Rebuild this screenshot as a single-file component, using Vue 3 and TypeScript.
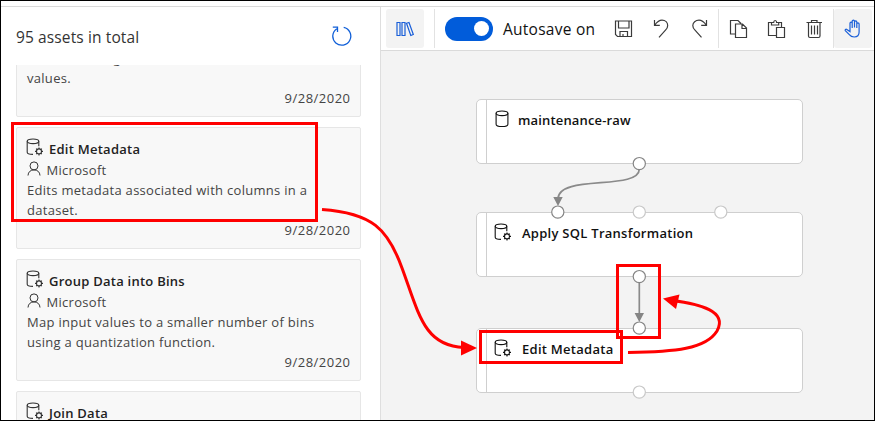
<script setup lang="ts">
interface Asset {
  id: number
  title?: string
  lines: string[]
  date?: string
}
interface Port {
  x: number
  edge: 'top' | 'bottom'
  linked: boolean
}
interface FlowNode {
  title: string
  y: number
  h: number
  gear: boolean
  ports: Port[]
}

const assets: Asset[] = [
  { id: 1, lines: ['Cleans missing', 'values.'], date: '9/28/2020' },
  { id: 2, title: 'Edit Metadata', lines: ['Edits metadata associated with columns in a', 'dataset.'], date: '9/28/2020' },
  { id: 3, title: 'Group Data into Bins', lines: ['Map input values to a smaller number of bins', 'using a quantization function.'], date: '9/28/2020' },
  { id: 4, title: 'Join Data', lines: [] },
]

const nodes: FlowNode[] = [
  { title: 'maintenance-raw', y: 48, h: 65, gear: false, ports: [{ x: 163, edge: 'bottom', linked: true }] },
  {
    title: 'Apply SQL Transformation', y: 161, h: 65, gear: true,
    ports: [
      { x: 81.5, edge: 'top', linked: true },
      { x: 163, edge: 'top', linked: false },
      { x: 244.5, edge: 'top', linked: false },
      { x: 163, edge: 'bottom', linked: true },
    ],
  },
  {
    title: 'Edit Metadata', y: 277, h: 64.5, gear: true,
    ports: [
      { x: 163, edge: 'top', linked: true },
      { x: 163, edge: 'bottom', linked: false },
    ],
  },
]
const teeth = [0, 45, 90, 135, 180, 225, 270, 315]
</script>

<template>
  <div class="frame">
    <svg class="defs" width="0" height="0">
      <symbol id="i-cyl" viewBox="0 0 18 18">
        <ellipse cx="8" cy="3.3" rx="5.9" ry="2.3" />
        <path d="M2.1 3.3V14.2C2.1 15.5 4.700 16.500 8 16.500S13.900 15.500 13.900 14.200V3.300" />
      </symbol>
      <symbol id="i-cylgear" viewBox="0 0 18 18">
        <ellipse cx="7" cy="3.300" rx="5.800" ry="2.300" />
        <path d="M1.200 3.300V14.200C1.200 15.500 3.400 16.300 7 16.400M12.800 3.300V8.200" />
        <circle cx="13" cy="13.400" r="2.500" />
        <path v-for="a in teeth" :key="a" d="M13 10.900V9.400" :transform="`rotate(${a} 13 13.400)`" />
      </symbol>
      <symbol id="i-person" viewBox="0 0 14 15">
        <circle cx="7" cy="4.900" r="4" />
        <path d="M1 14.500C1.200 11 3.500 8.900 7 8.900S12.800 11 13 14.500" />
      </symbol>
    </svg>

    <div class="strip"></div>
    <div class="workspace">
      <aside class="sidebar">
        <header class="side-head">
          <span class="total">95 assets in total</span>
          <svg class="refresh" width="22" height="22" viewBox="0 0 22 22">
            <path d="M13.700 2.400A9 9 0 1 1 6.800 3.700M2.800 2.200H7.500V6.900" />
          </svg>
        </header>
        <div class="list">
          <article v-for="a in assets" :key="a.id" class="card" :class="{ clipped: !a.title }">
            <template v-if="a.title">
              <h3><svg class="ico" width="18" height="18"><use href="#i-cylgear" /></svg><span>{{ a.title }}</span></h3>
              <p v-if="a.date" class="author"><svg class="ico" width="14" height="15"><use href="#i-person" /></svg><span>Microsoft</span></p>
            </template>
            <p v-for="l in a.lines" :key="l" class="desc">{{ l }}</p>
            <time v-if="a.date">{{ a.date }}</time>
          </article>
        </div>
      </aside>

      <main class="main">
        <nav class="toolbar">
          <button class="tool tinted blue library">
            <svg width="20" height="18" viewBox="0 0 20 18">
              <path d="M2 2.500h3v13H2zM7 2.500h3v13H7zM11.500 3.300l2.500-.8 4.300 12-2.500 1z" />
            </svg>
          </button>
          <i class="rule first"></i>
          <span class="toggle"><b></b></span>
          <span class="autosave">Autosave on</span>
          <button class="tool save">
            <svg width="20" height="20" viewBox="0 0 20 20">
              <path d="M2.500 2h16v15.500h-14L2.500 15.500zM5.500 2v7h10.500V2M7 17.500v-5h7.500v5M10 17.500v-2.500" />
            </svg>
          </button>
          <button class="tool">
            <svg width="20" height="20" viewBox="0 0 20 20">
              <path d="M3.500 1v5.300h5.300M3.700 6.100C6 3 8 1.200 11 1.200c3.400 0 5.700 2.300 5.700 5.300 0 2-.8 3.200-2 4.400L8 18.300" />
            </svg>
          </button>
          <button class="tool">
            <svg width="20" height="20" viewBox="0 0 20 20">
              <path d="M17.500 1v5.300h-5.300M17.300 6.100C15 3 13 1.200 10 1.200 6.600 1.200 3.800 3.500 3.800 6.500c0 2 .8 3.200 2 4.400l6.700 7.400" />
            </svg>
          </button>
          <i class="rule"></i>
          <button class="tool">
            <svg width="20" height="20" viewBox="0 0 20 20">
              <path d="M7.500 15H2.500V1.500H10L13 4.500M7.500 5h7l4 4v9.500h-11zM14 5v4.500h4.500" />
            </svg>
          </button>
          <button class="tool">
            <svg width="20" height="20" viewBox="0 0 20 20">
              <path d="M10.500 16.500h-8v-13h3M12.500 3.500h3v5M5.500 6V3.500h2.200C7.700.8 10.600.8 10.600 3.500h2.100V6zM10.500 8.500h8v10h-8z" />
            </svg>
          </button>
          <button class="tool">
            <svg width="20" height="20" viewBox="0 0 20 20">
              <path d="M2.500 3.500h15.500M7.500 3.300V1.500h5.500v1.800M4.500 3.500v13.500c0 1 .5 1.500 1.500 1.500h8.500c1 0 1.500-.5 1.500-1.500V3.500M7.500 6.500v9M10.500 6.500v9M13.500 6.500v9" />
            </svg>
          </button>
          <i class="rule last"></i>
          <button class="tool tinted blue hand">
            <svg width="20" height="20" viewBox="0 0 20 20">
              <path d="M7 11V4.200c0-1.400 2.200-1.400 2.200 0V9M9.200 8.500V2.200c0-1.400 2.300-1.400 2.300 0v6.300M11.500 8.500V2.900c0-1.400 2.300-1.400 2.300 0V9M13.800 9V4.900c0-1.400 2.300-1.400 2.300 0v8.100c0 3-2 5-4.900 5-2.300 0-3.700-.8-4.900-2.300L2.300 11.700c-.6-.9.500-1.900 1.500-1.300L7 12.600V10" />
            </svg>
          </button>
        </nav>

        <section class="canvas">
          <div
            v-for="n in nodes"
            :key="n.title"
            class="node"
            :class="{ wide: n.gear }"
            :style="{ top: n.y + 'px', height: n.h + 'px' }"
          >
            <div class="label">
              <svg class="ico" width="18" height="18"><use :href="n.gear ? '#i-cylgear' : '#i-cyl'" /></svg>
              <span>{{ n.title }}</span>
            </div>
          </div>
          <svg class="links" width="493" height="369" viewBox="381 51 493 369">
            <path class="wire" d="M639.300 169C639.300 191 558 174 558 199" />
            <path class="wire" d="M639.300 281V315" />
            <path class="tip" d="M553.300 197h9.400l-4.700 9zM634.600 313h9.400l-4.700 9z" />
            <g v-for="n in nodes" :key="n.title">
              <circle
                v-for="(p, i) in n.ports"
                :key="i"
                :class="{ linked: p.linked }"
                :cx="476.300 + p.x"
                :cy="50.600 + n.y + (p.edge === 'top' ? 0.500 : n.h)"
                r="6.100"
              />
            </g>
          </svg>
        </section>
      </main>
    </div>

    <svg class="callouts" width="875" height="421" viewBox="0 0 875 421">
      <rect x="12.500" y="123.500" width="304" height="97" />
      <rect x="480.500" y="331.500" width="141" height="31" />
      <rect x="617.500" y="265.500" width="42" height="72" />
      <path class="stroke" d="M322 209.500C372 213 388 229 402 268C419 314 424 346 464 347.500" />
      <path class="fill" d="M461 340.500L477 348L461 355.500z" />
      <path class="stroke" d="M628 352.500C675 352 706 349 717 331C728 311 700 304 672 300.500" />
      <path class="fill" d="M663 298.500L679.500 294.500L676 309z" />
    </svg>
  </div>
</template>

<style>
body {
  margin: 0;
}
</style>

<style scoped>
.frame {
  position: relative;
  box-sizing: border-box;
  width: 875px;
  height: 421px;
  border: 1px solid #000;
  background: #fff;
  overflow: hidden;
  display: flex;
  flex-direction: column;
  font-family: "Open Sans", "Noto Sans", sans-serif;
  color: #333;
}
.defs {
  position: absolute;
}
.strip {
  height: 5px;
  flex: none;
  border-bottom: 1px solid #dadada;
}
.workspace {
  flex: 1;
  display: flex;
  min-height: 0;
}
svg {
  fill: none;
  flex: none;
}
.ico {
  stroke: #333;
  stroke-width: 1.1;
}
.sidebar {
  width: 379px;
  flex: none;
  display: flex;
  flex-direction: column;
  border-right: 1px solid #dedede;
}
.side-head {
  height: 58px;
  flex: none;
  display: flex;
  align-items: center;
  justify-content: space-between;
  padding: 0 28px 0 15px;
}
.total {
  font-size: 15.500px;
  letter-spacing: 0.120px;
  padding-top: 1px;
}
.refresh {
  stroke: #105fd8;
  stroke-width: 1.3;
}
.list {
  flex: 1;
  min-height: 0;
  overflow: hidden;
  padding-left: 15px;
  display: flex;
  flex-direction: column;
  gap: 10px;
}
.card {
  flex: none;
  box-sizing: border-box;
  width: 345px;
  height: 122px;
  padding: 11px 10px 0;
  border: 1px solid #e6e6e6;
  border-radius: 2px;
  background: #f8f8f8;
  font-size: 13px;
  line-height: 20px;
  letter-spacing: 0.290px;
}
.card.clipped {
  height: 70px;
  margin-top: -18px;
  padding-top: 0;
}
.card h3,
.card p {
  margin: 0;
  height: 20px;
  display: flex;
  white-space: nowrap;
}
.card h3 {
  font-size: 13px;
  font-weight: 600;
  letter-spacing: 0.250px;
  color: #222;
  height: 21px;
}
.card h3 svg {
  margin: -1px 5px 0 -1px;
}
.author svg {
  margin: 1px 5.500px 0 0;
  stroke-width: 1;
}
.card time {
  display: block;
  text-align: right;
  letter-spacing: 0.480px;
  margin-right: -0.500px;
}
.card p,
.card time {
  color: #444;
}
.main {
  flex: 1;
  display: flex;
  flex-direction: column;
  min-width: 0;
}
.toolbar {
  height: 43px;
  flex: none;
  display: flex;
  align-items: center;
  padding-left: 5px;
  border-bottom: 1px solid #dadada;
}
.tool {
  width: 38px;
  height: 39px;
  padding: 0;
  border: 0;
  background: none;
  flex: none;
  display: flex;
  align-items: center;
  justify-content: center;
  border-radius: 3px;
}
.tool svg {
  stroke: #3b3b3b;
  stroke-width: 1.2;
}
.tool.blue svg {
  stroke: #1a5fd8;
}
.tinted {
  background: #f3f3f3;
}
.rule {
  width: 1px;
  height: 39px;
  background: #e2e2e2;
  flex: none;
}
.rule.first {
  margin: 0 10px;
}
.toggle {
  width: 48px;
  height: 24px;
  border-radius: 12px;
  background: #015cda;
  box-sizing: border-box;
  padding: 4.500px;
  display: flex;
  justify-content: flex-end;
  flex: none;
}
.toggle b {
  width: 15px;
  height: 15px;
  border-radius: 50%;
  background: #fff;
}
.autosave {
  width: 101px;
  margin-left: 10px;
  font-size: 15.500px;
  letter-spacing: 0.260px;
  color: #111;
  white-space: nowrap;
}
.canvas {
  position: relative;
  flex: 1;
  background: #f3f3f3;
  overflow: hidden;
}
.node {
  position: absolute;
  left: 95px;
  width: 327px;
  box-sizing: border-box;
  border: 1.500px solid #cfcfcf;
  border-radius: 5px;
  background: linear-gradient(90deg, #fff 9px, #cfcfcf 9px, #cfcfcf 10px, #fff 10px);
}
.label {
  display: flex;
  align-items: center;
  gap: 6px;
  padding: 9px 0 0 17px;
  height: 22px;
  font-size: 13px;
  font-weight: 600;
  letter-spacing: 0.160px;
  color: #111;
}
.wide .label {
  gap: 10px;
  letter-spacing: 0.270px;
}
.label .ico {
  stroke: #111;
  margin-top: -2px;
}
.links {
  position: absolute;
  left: 0;
  top: 0;
}
.links circle {
  fill: #fff;
  stroke: #c8c8c8;
  stroke-width: 1.200;
}
.links circle.linked {
  stroke: #858585;
}
.wire {
  stroke: #8a8a8a;
  stroke-width: 1.700;
}
.tip {
  fill: #858585;
}
.callouts {
  position: absolute;
  left: -1px;
  top: -1px;
}
.callouts rect,
.stroke {
  stroke: #f00;
  stroke-width: 3;
}
.fill {
  fill: #f00;
}
</style>
